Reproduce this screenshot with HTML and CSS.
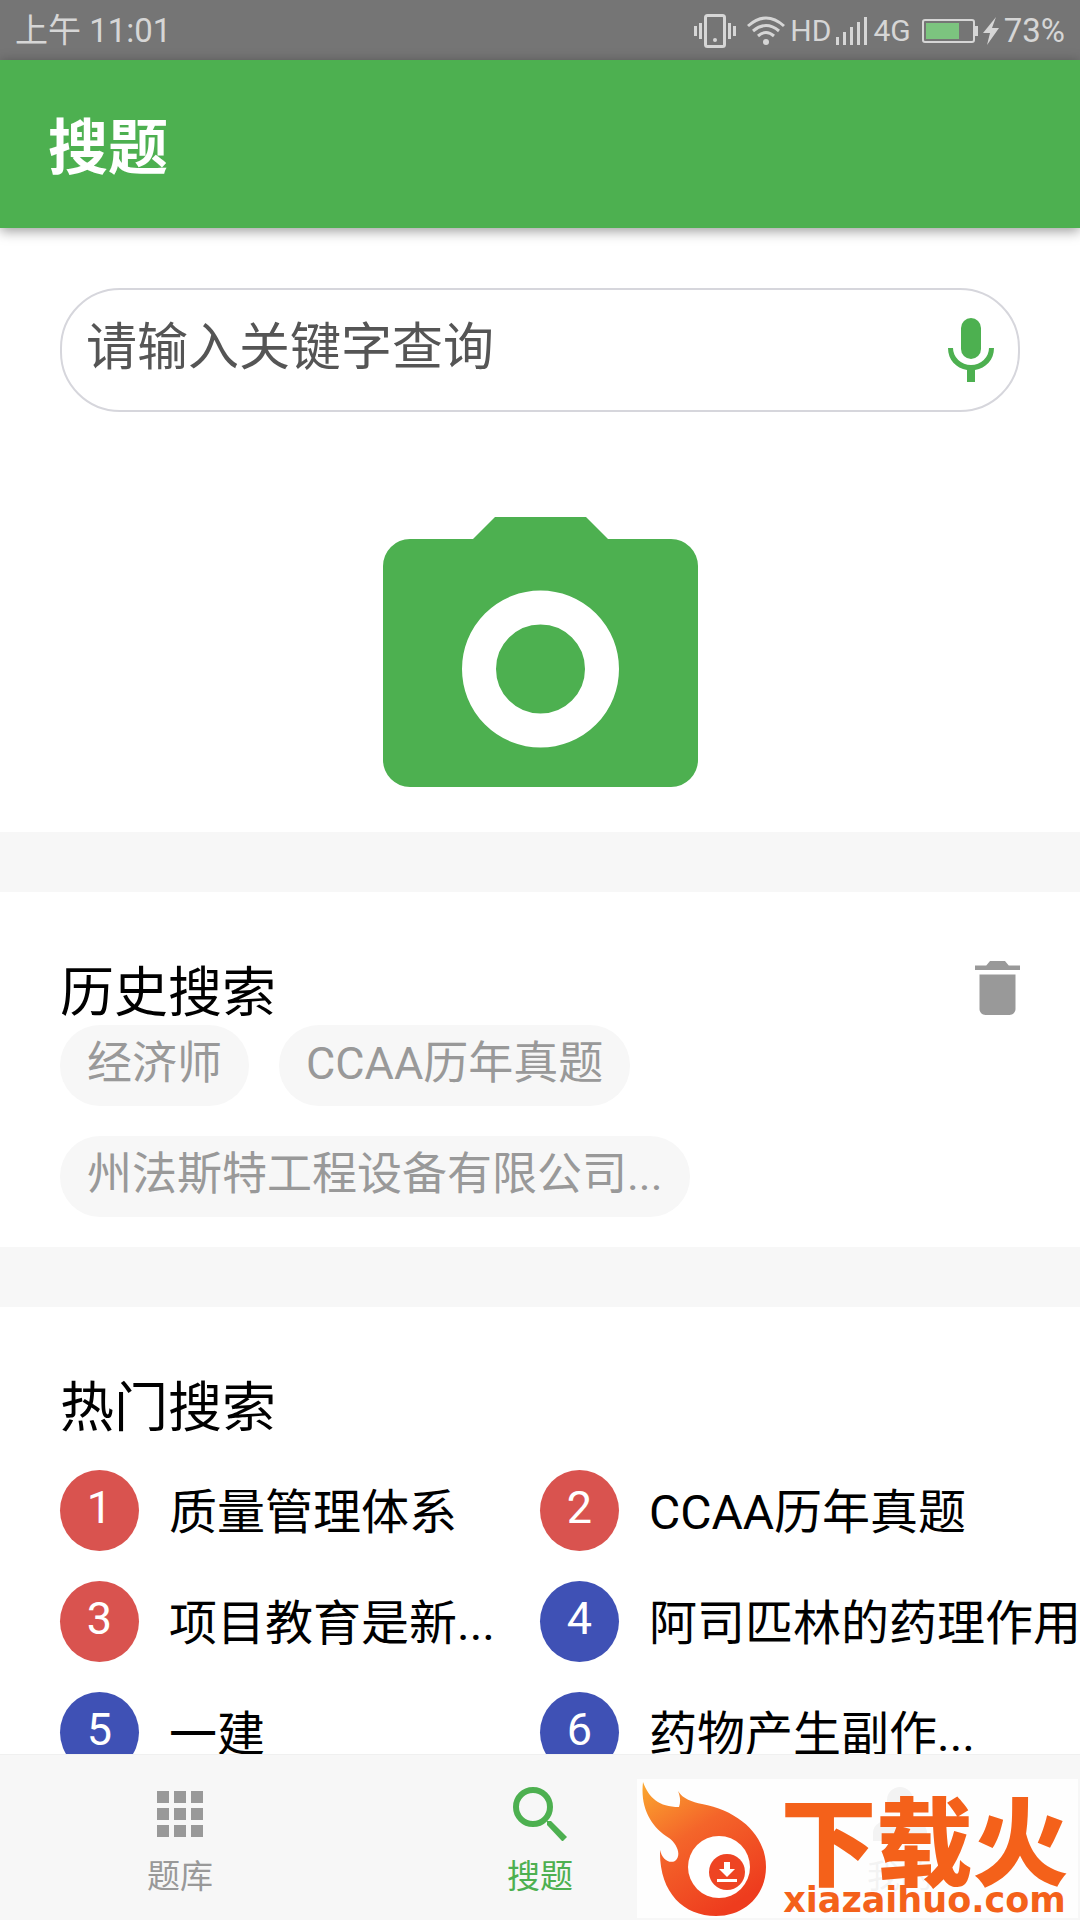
FILE: index.html
```html
<!DOCTYPE html>
<html lang="zh-CN">
<head>
<meta charset="utf-8">
<meta name="viewport" content="width=device-width, initial-scale=1">
<title>搜题</title>
<link rel="stylesheet" href="styles.css">
</head>
<body>
<div class="app">
  <div class="status-bar">
    <span>上午 11:01</span>
    <div class="status-icons">
      <svg class="icon-vibrate" viewBox="0 0 42 34" aria-hidden="true">
        <rect x="11.500" y="1.500" width="19" height="31" rx="2" fill="none" stroke="#d6d6d6" stroke-width="3"/>
        <circle cx="21" cy="26" r="2" fill="#d6d6d6"/>
        <path d="M1.500 12v10M6.500 9v16M35.500 9v16M40.500 12v10" stroke="#d6d6d6" stroke-width="3"/>
      </svg>
      <svg class="icon-wifi" viewBox="0 0 38 30" aria-hidden="true">
        <g fill="none" stroke="#d6d6d6" stroke-width="3"><path d="M1 10Q19-6 37 10"/><path d="M6 15Q19 4 32 15"/><path d="M11 20Q19 13 27 20"/></g>
        <circle cx="19" cy="26" r="3" fill="#d6d6d6"/>
      </svg>
      <span class="status-label">HD</span>
      <svg class="icon-signal" viewBox="0 0 32 28" aria-hidden="true">
        <path d="M1.500 28v-8M8.500 28V15M15.500 28V10M22.500 28V5M29.500 28V0" stroke="#d6d6d6" stroke-width="3"/>
      </svg>
      <span class="status-label">4G</span>
      <svg class="icon-battery" viewBox="0 0 56 24" aria-hidden="true">
        <rect x="1" y="1" width="51" height="22" rx="2" fill="none" stroke="#d6d6d6" stroke-width="2"/>
        <rect x="4" y="4" width="33" height="16" fill="#7cc47f"/>
        <path d="M53 7h3v10h-3z" fill="#d6d6d6"/>
      </svg>
      <svg class="icon-bolt" viewBox="0 0 16 28" aria-hidden="true"><path d="M13 0L0 16h7L4 28 16 11H9z" fill="#d6d6d6"/></svg>
      <span>73%</span>
    </div>
  </div>

  <header class="header"><h1 class="header-title">搜题</h1></header>

  <main class="content">
    <section class="search-section">
      <form class="search-box">
        <input class="search-input" type="text" placeholder="请输入关键字查询" aria-label="请输入关键字查询">
        <button class="icon-button" type="button" aria-label="语音输入">
          <svg class="icon-mic" viewBox="0 0 46 64" aria-hidden="true">
            <rect x="13" y="0" width="20" height="41" rx="10" fill="#4db050"/>
            <path d="M0 30h5a18 17 0 0 0 36 0h5c0 12-8 20-19 22v12h-8V52C8 50 0 42 0 30z" fill="#4db050"/>
          </svg>
        </button>
      </form>
      <button class="icon-button camera-button" type="button" aria-label="拍照搜题">
        <svg class="icon-camera" viewBox="0 0 315 270" aria-hidden="true">
          <path d="M112 0h91l22 22h63a27 27 0 0 1 27 27v194a27 27 0 0 1-27 27H27a27 27 0 0 1-27-27V49a27 27 0 0 1 27-27h63z" fill="#4db050"/>
          <circle cx="157.500" cy="152" r="61.500" fill="none" stroke="#fff" stroke-width="34"/>
        </svg>
      </button>
    </section>

    <section class="panel">
      <div class="panel-head">
        <h2 class="panel-title">历史搜索</h2>
        <button class="icon-button" type="button" aria-label="清空历史">
          <svg class="icon-trash" viewBox="96 64 320 384" aria-hidden="true"><path fill="#999" d="M128 405.400C128 428.800 147.200 448 170.700 448h170.600c23.500 0 42.700-19.200 42.700-42.600V160H128zM416 96h-80l-26.800-32H202.800L176 96H96v32h320z"/></svg>
        </button>
      </div>
      <div class="chips">
        <button class="chip" type="button">经济师</button>
        <button class="chip" type="button">CCAA历年真题</button>
        <button class="chip" type="button">州法斯特工程设备有限公司...</button>
      </div>
    </section>

    <section class="panel">
      <div class="panel-head"><h2 class="panel-title">热门搜索</h2></div>
      <ol class="hot-list">
        <li><a class="hot-item" href="#"><span class="rank rank-top">1</span><span class="hot-label">质量管理体系</span></a></li>
        <li><a class="hot-item" href="#"><span class="rank rank-top">2</span><span class="hot-label">CCAA历年真题</span></a></li>
        <li><a class="hot-item" href="#"><span class="rank rank-top">3</span><span class="hot-label">项目教育是新...</span></a></li>
        <li><a class="hot-item" href="#"><span class="rank">4</span><span class="hot-label">阿司匹林的药理作用</span></a></li>
        <li><a class="hot-item" href="#"><span class="rank">5</span><span class="hot-label">一建</span></a></li>
        <li><a class="hot-item" href="#"><span class="rank">6</span><span class="hot-label">药物产生副作...</span></a></li>
      </ol>
    </section>
  </main>

  <nav class="tab-bar">
    <a class="tab" href="#">
      <svg class="tab-icon" viewBox="0 0 54 54" aria-hidden="true"><path fill="#999" d="M4 4h12v12H4zM21 4h12v12H21zM38 4h12v12H38zM4 21h12v12H4zM21 21h12v12H21zM38 21h12v12H38zM4 38h12v12H4zM21 38h12v12H21zM38 38h12v12H38z"/></svg>
      <span>题库</span>
    </a>
    <a class="tab tab-active" href="#" aria-current="page">
      <svg class="tab-icon" viewBox="0 0 54 54" aria-hidden="true"><circle cx="20" cy="20" r="17" fill="none" stroke="#4db050" stroke-width="6"/><path d="M34 34l4 0 16 16-4.500 4.500L34 38z" fill="#4db050"/></svg>
      <span>搜题</span>
    </a>
    <a class="tab" href="#">
      <svg class="tab-icon" viewBox="0 0 54 54" aria-hidden="true"><circle cx="27" cy="13" r="13" fill="#999"/><path d="M0 54V46q0-14 27-14t27 14v8z" fill="#999"/></svg>
      <span>我的</span>
    </a>
  </nav>

  <div class="watermark">
    <svg class="watermark-logo" viewBox="0 0 130 136" aria-hidden="true">
      <defs><linearGradient id="flame" x1="0" y1="0" x2="0.600" y2="1"><stop offset="0" stop-color="#fba82f"/><stop offset="0.450" stop-color="#f4652a"/><stop offset="1" stop-color="#ee3c1e"/></linearGradient></defs>
      <path fill="url(#flame)" d="M6 1C12 17 22 26 42 26C44 20 43 15 41 10C46 18 55 21 65 23C102 30 129 54 129 86C129 114 108 135 79 135C46 135 22 111 23 69C25 78 32 83 38 80C45 74 40 63 32 57C14 46 3 27 6 1z"/>
      <circle cx="82" cy="86" r="31" fill="#fff"/>
      <circle cx="90" cy="91" r="18" fill="#ee4423"/>
      <path fill="#fff" d="M87 81h6v7h5l-8 8-8-8h5zM80 98h20v3H80z"/>
    </svg>
    <div class="watermark-text"><span class="watermark-name">下载火</span><span class="watermark-site">xiazaihuo.com</span></div>
  </div>
</div>
</body>
</html>
```
FILE: styles.css
```css
* { box-sizing: border-box; }

body {
  margin: 0;
  background: #fff;
  color: #000;
  font-family: Roboto, "Noto Sans CJK SC", sans-serif;
}

svg { display: block; flex: none; }
a { color: inherit; text-decoration: none; }
h1, h2 { margin: 0; }

.app {
  position: relative;
  display: flex;
  flex-direction: column;
  height: 100vh;
  overflow: hidden;
}

.status-bar {
  display: flex;
  flex: none;
  align-items: center;
  justify-content: space-between;
  height: 60px;
  padding: 2px 15px 0;
  background: #757575;
  color: #d6d6d6;
  font-size: 33px;
  line-height: 58px;
}
.status-icons { display: flex; align-items: center; gap: 5px; }
.status-label { font-size: 30px; }
.icon-vibrate { width: 42px; height: 34px; margin-right: 6px; }
.icon-wifi { width: 38px; height: 30px; }
.icon-signal { width: 32px; height: 28px; }
.icon-battery { width: 56px; height: 24px; margin-left: 6px; }
.icon-bolt { width: 16px; height: 28px; }

.header {
  z-index: 1;
  flex: none;
  padding: 41px 48px 31px;
  background: #4db050;
  box-shadow: 0 3px 12px rgba(0, 0, 0, 0.4);
}
.header-title { color: #fff; font-size: 60px; font-weight: 700; line-height: 96px; }

.content { flex: 1; min-height: 0; overflow: hidden; }

.icon-button { display: block; padding: 0; border: 0; background: none; }

.search-section { padding: 60px 60px 45px; }
.search-box {
  display: flex;
  align-items: center;
  height: 124px;
  padding: 0 24px;
  border: 2px solid #d6d6dc;
  border-radius: 60px;
}
.search-input {
  flex: 1;
  min-width: 0;
  height: 100%;
  padding: 0 0 6px;
  border: 0;
  outline: 0;
  background: none;
  font-family: inherit;
  font-size: 51px;
}
.search-input::placeholder { color: #555; opacity: 1; }
.icon-mic { width: 46px; height: 64px; }
.camera-button { margin: 105px auto 0; }
.icon-camera { width: 315px; height: 270px; }

.panel { padding: 60px 60px 30px; border-top: 60px solid #f7f7f7; }
.panel-head {
  display: flex;
  align-items: flex-start;
  justify-content: space-between;
  height: 73px;
  padding-top: 9px;
}
.panel-title { font-size: 54px; font-weight: 400; line-height: 65px; }
.icon-trash { width: 45px; height: 54px; }

.chips { display: flex; flex-wrap: wrap; gap: 30px; }
.chip {
  height: 81px;
  padding: 0 27px 4px;
  border: 0;
  border-radius: 40px;
  background: #f7f7f7;
  color: #999;
  font-family: inherit;
  font-size: 45px;
  line-height: 77px;
}

.hot-list {
  display: grid;
  grid-template-columns: repeat(2, minmax(0, 1fr));
  gap: 30px 0;
  margin: 30px 0 0;
  padding: 0;
  list-style: none;
}
.hot-item {
  display: flex;
  gap: 30px;
  font-size: 48px;
  line-height: 76px;
  white-space: nowrap;
}
.hot-label { padding-top: 5px; }
.rank {
  flex: none;
  width: 79px;
  height: 81px;
  border-radius: 50%;
  background: #3f51b5;
  color: #fff;
  font-size: 45px;
  line-height: 75px;
  text-align: center;
}
.rank-top { background: #d9534f; }

.tab-bar {
  display: flex;
  flex: none;
  border-top: 1px solid #f0f0f0;
  background: #f7f7f7;
}
.tab {
  display: flex;
  flex: 1;
  flex-direction: column;
  align-items: center;
  gap: 12px;
  padding: 32px 0 19px;
  color: #999;
  font-size: 33px;
  line-height: 48px;
}
.tab-active { color: #4db050; }
.tab-icon { width: 54px; height: 54px; }

.watermark {
  position: absolute;
  right: 2px;
  bottom: 2px;
  display: flex;
  width: 441px;
  height: 139px;
  padding-top: 2px;
  background: rgba(255, 255, 255, 0.88);
  color: #f4611a;
}
.watermark-logo { width: 130px; height: 136px; }
.watermark-text {
  display: flex;
  flex: 1;
  flex-direction: column;
  align-items: center;
  padding: 12px 0 0 4px;
}
.watermark-name {
  font-family: "Noto Sans CJK SC", sans-serif;
  font-size: 96px;
  font-weight: 900;
  line-height: 88px;
}
.watermark-site {
  font-family: "DejaVu Sans", sans-serif;
  font-size: 35px;
  font-weight: 700;
  line-height: 38px;
}
```
